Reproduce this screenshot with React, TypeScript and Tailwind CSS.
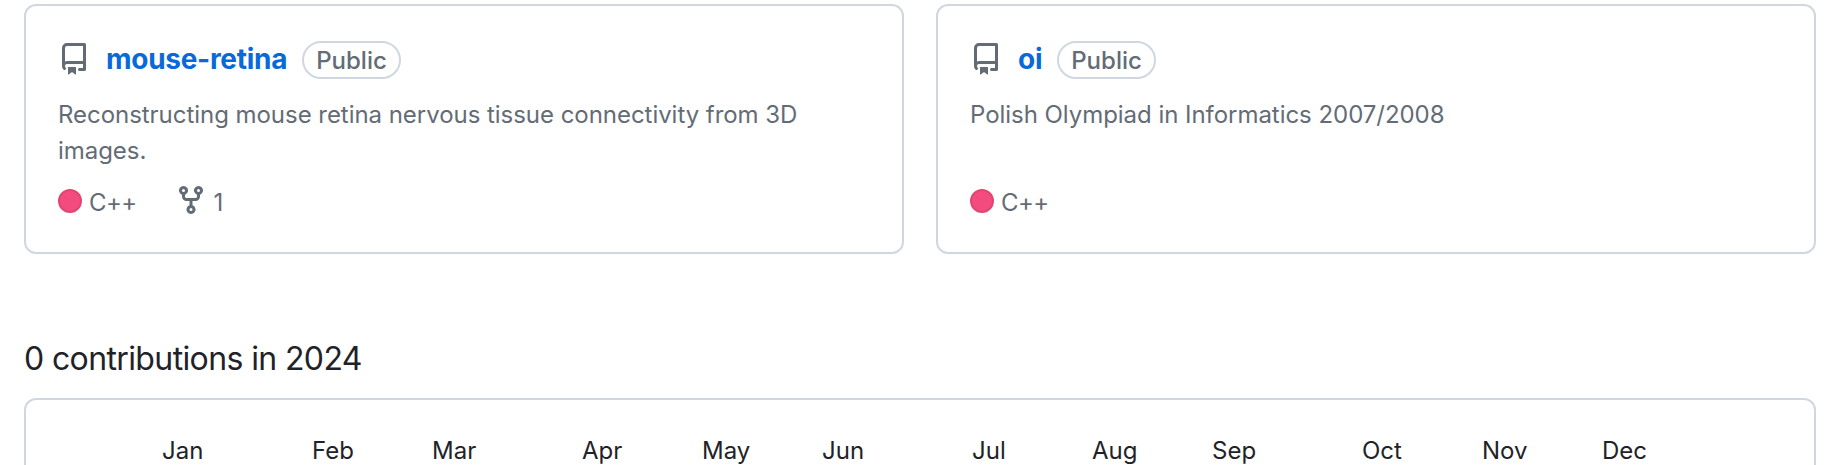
import React from 'react';

const months: [string, string][] = [
  ['Jan', 'w-[150px]'], ['Feb', 'w-[120px]'], ['Mar', 'w-[150px]'], ['Apr', 'w-[120px]'],
  ['May', 'w-[120px]'], ['Jun', 'w-[150px]'], ['Jul', 'w-[120px]'], ['Aug', 'w-[120px]'],
  ['Sep', 'w-[150px]'], ['Oct', 'w-[120px]'], ['Nov', 'w-[120px]'], ['Dec', 'w-[120px]'],
];

function RepoIcon() {
  return (
    <svg viewBox="0 0 16 16" className="mb-[2px] h-8 w-8 shrink-0 fill-[#636c76]">
      <path d="M2 2.5A2.5 2.5 0 0 1 4.5 0h8.75a.75.75 0 0 1 .75.75v12.5a.75.75 0 0 1-.75.75h-2.5a.75.75 0 0 1 0-1.5h1.75v-2h-8a1 1 0 0 0-.714 1.7.75.75 0 1 1-1.072 1.05A2.495 2.495 0 0 1 2 11.5Zm10.5-1h-8a1 1 0 0 0-1 1v6.708A2.486 2.486 0 0 1 4.5 9h8ZM5 12.25a.25.25 0 0 1 .25-.25h3.5a.25.25 0 0 1 .25.25v3.25a.25.25 0 0 1-.4.2l-1.45-1.087a.249.249 0 0 0-.3 0L5.4 15.7a.25.25 0 0 1-.4-.2Z" />
    </svg>
  );
}

function ForkIcon() {
  return (
    <svg viewBox="0 0 16 16" className="mb-[6px] h-8 w-8 fill-[#636c76]">
      <path d="M5 5.372v.878c0 .414.336.75.75.75h4.5a.75.75 0 0 0 .75-.75v-.878a2.25 2.25 0 1 1 1.5 0v.878a2.25 2.25 0 0 1-2.25 2.25h-1.5v2.128a2.251 2.251 0 1 1-1.5 0V8.5h-1.5A2.25 2.25 0 0 1 3.5 6.25v-.878a2.25 2.25 0 1 1 1.5 0ZM5 3.25a.75.75 0 1 0-1.5 0 .75.75 0 0 0 1.5 0Zm6.75.75a.75.75 0 1 0 0-1.5.75.75 0 0 0 0 1.5Zm-3 8.75a.75.75 0 1 0-1.5 0 .75.75 0 0 0 1.5 0Z" />
    </svg>
  );
}

function RepoCard({ name, description, forks }: { name: string; description: string; forks?: number }) {
  return (
    <article className="flex h-[250px] flex-1 flex-col rounded-xl border-2 border-[#d0d7e0] px-8 pt-[34px] text-[#636c76]">
      <div className="flex h-[40px] items-center">
        <RepoIcon />
        <a className="mb-[2px] ml-4 text-[28px] font-[650] tracking-[-0.28px] text-[#0969da]">{name}</a>
        <span className="ml-[15px] flex h-[38px] items-center rounded-full border-2 border-[#d0d7e0] px-3 pt-[2px] text-[24px] font-medium">Public</span>
      </div>
      <p className="mt-[17px] h-[72px] text-[24px] leading-9 tracking-[-0.04px]">{description}</p>
      <div className="mt-[16px] flex h-9 items-center text-[24px]">
        <span className="mr-[7px] mb-[4px] h-6 w-6 rounded-full border-2 border-[#e2466f] bg-[#f34b7d]" />
        <span className="tracking-[-0.6px]">C++</span>
        {forks !== undefined && <span className="ml-[38px] flex h-9 items-center gap-[7px]"><ForkIcon />{forks}</span>}
      </div>
    </article>
  );
}

export default function App() {
  return (
    <main className="flex h-[465px] flex-col overflow-hidden bg-white px-6 pt-1 font-['Inter',sans-serif] text-[#1f2328]">
      <section className="flex gap-8">
        <RepoCard name="mouse-retina" description="Reconstructing mouse retina nervous tissue connectivity from 3D images." forks={1} />
        <RepoCard name="oi" description="Polish Olympiad in Informatics 2007/2008" />
      </section>
      <h2 className="mt-[81px] text-[32px] leading-[48px] tracking-[-0.62px]">0 contributions in 2024</h2>
      <section className="mt-[15px] h-[120px] shrink-0 rounded-xl border-2 border-[#d0d7e0] pt-[37px] pl-[136px]">
        <div className="flex text-[24px] leading-7">
          {months.map(([label, width]) => <span key={label} className={`${width} shrink-0`}>{label}</span>)}
        </div>
      </section>
    </main>
  );
}
